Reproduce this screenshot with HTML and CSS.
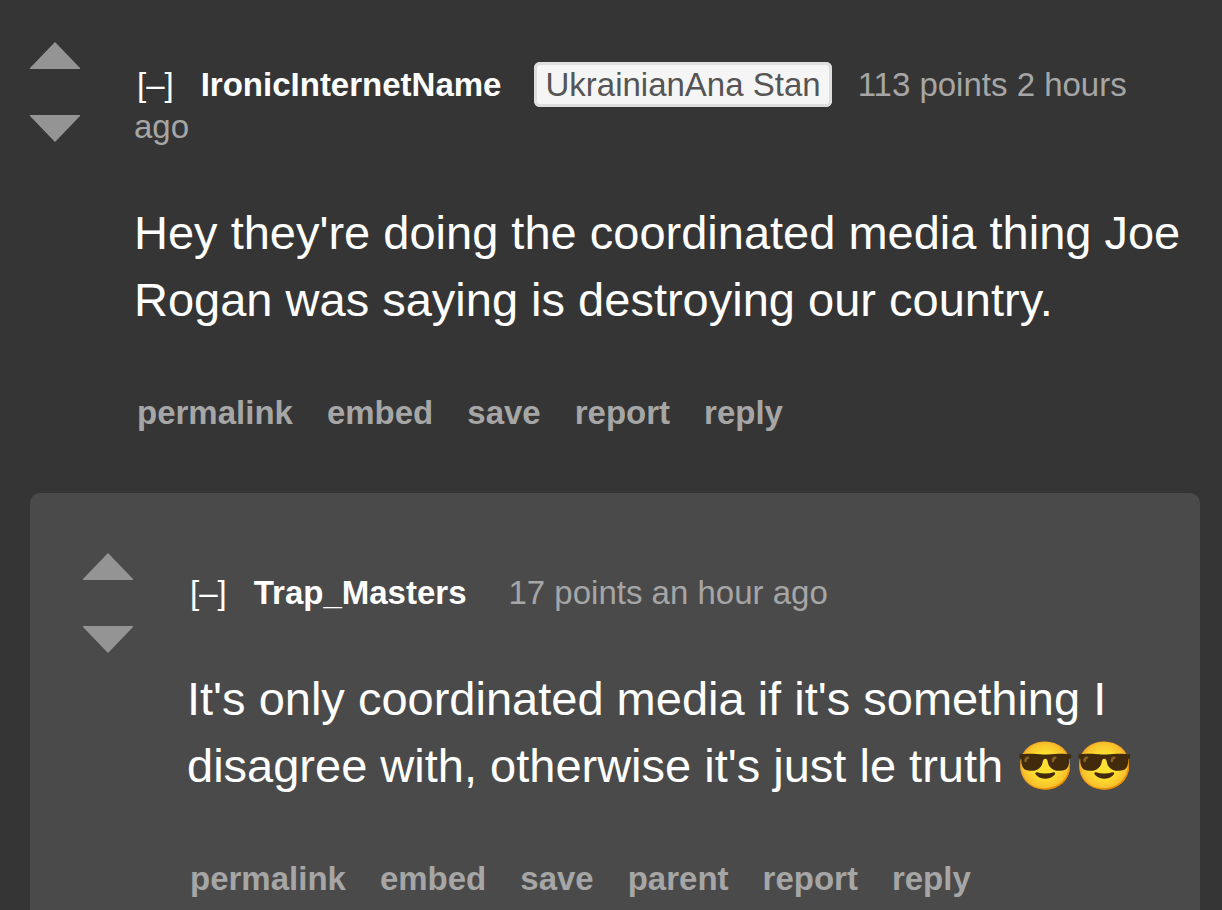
FILE: index.html
```html
<!DOCTYPE html>
<html lang="en">
<head>
    <meta charset="UTF-8">
    <meta name="viewport" content="width=device-width, initial-scale=1.0">
    <title>Comments</title>
    <link rel="stylesheet" href="styles.css">
</head>
<body>

<div class="comment">
    <div class="votes">
        <button type="button" aria-label="upvote">
            <svg viewBox="0 0 50 28"><path d="M25 0 L50 26 V27 H0 V26 Z"/></svg>
        </button>
        <button type="button" aria-label="downvote">
            <svg viewBox="0 0 50 28"><path d="M0 1 H50 V2 L25 28 L0 2 Z"/></svg>
        </button>
    </div>
    <div class="entry">
        <p class="tagline"><a href="#" class="expand">[–]</a><a href="#" class="author">IronicInternetName</a><span class="flair">UkrainianAna Stan</span><span class="score">113 points</span> <time>2 hours ago</time></p>
        <p class="text">Hey they're doing the coordinated media thing Joe Rogan was saying is destroying our country.</p>
        <ul class="actions">
            <li><a href="#">permalink</a></li>
            <li><a href="#">embed</a></li>
            <li><a href="#">save</a></li>
            <li><a href="#">report</a></li>
            <li><a href="#">reply</a></li>
        </ul>
    </div>
</div>

<div class="comment child">
    <div class="votes">
        <button type="button" aria-label="upvote">
            <svg viewBox="0 0 50 28"><path d="M25 0 L50 26 V27 H0 V26 Z"/></svg>
        </button>
        <button type="button" aria-label="downvote">
            <svg viewBox="0 0 50 28"><path d="M0 1 H50 V2 L25 28 L0 2 Z"/></svg>
        </button>
    </div>
    <div class="entry">
        <p class="tagline"><a href="#" class="expand">[–]</a><a href="#" class="author">Trap_Masters</a><span class="score">17 points</span> <time>an hour ago</time></p>
        <p class="text">It's only coordinated media if it's something I disagree with, otherwise it's just le truth 😎😎</p>
        <ul class="actions">
            <li><a href="#">permalink</a></li>
            <li><a href="#">embed</a></li>
            <li><a href="#">save</a></li>
            <li><a href="#">parent</a></li>
            <li><a href="#">report</a></li>
            <li><a href="#">reply</a></li>
        </ul>
    </div>
</div>

</body>
</html>
```

FILE: styles.css
```css
body {
    margin: 0;
    padding: 42px 22px 0 30px;
    background-color: #353535;
    font-family: "Liberation Sans", Arial, sans-serif;
}

a {
    color: inherit;
    text-decoration: none;
}

.comment {
    display: flex;
    gap: 54px;
}

.votes {
    display: flex;
    flex-direction: column;
    gap: 44px;
    width: 50px;
    flex-shrink: 0;
}

.votes button {
    padding: 0;
    border: none;
    background: none;
    cursor: pointer;
}

.votes svg {
    display: block;
    width: 50px;
    height: 28px;
    fill: #949494;
}

.entry {
    flex: 1;
    padding: 22px 12px 0 0;
}

.tagline {
    margin: 0;
    font-size: 33px;
    line-height: 42px;
    color: #a6a6a6;
}

.expand {
    margin-right: 27px;
    padding-left: 3px;
    color: #fff;
}

.author {
    font-weight: bold;
    color: #fff;
}

.flair {
    margin-left: 33px;
    padding: 1px 8px;
    border: 3px solid #dedede;
    border-radius: 6px;
    background-color: #f5f5f5;
    color: #555;
}

.score {
    margin-left: 26px;
}

.author + .score {
    margin-left: 42px;
}

.text {
    margin: 51px 0 0;
    font-size: 47px;
    line-height: 67px;
    color: #fff;
}

.actions {
    display: flex;
    flex-wrap: wrap;
    gap: 34px;
    margin: 59px 0 0;
    padding: 0 0 0 3px;
    list-style: none;
    font-size: 33px;
    font-weight: bold;
    line-height: 42px;
    color: #a6a6a6;
}

.child {
    margin-top: 59px;
    padding: 60px 30px 30px 53px;
    border-radius: 10px;
    background-color: #4a4a4a;
}

.child .entry {
    padding-top: 19px;
}
```
